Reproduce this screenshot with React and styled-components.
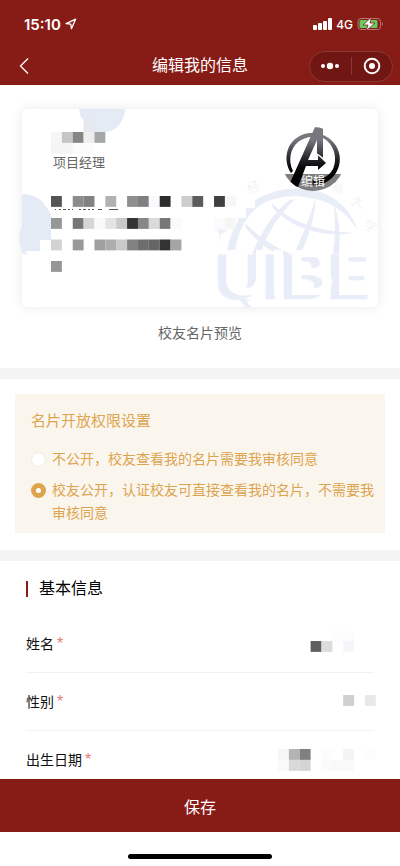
import React, { useState } from "react";
import styled, { createGlobalStyle } from "styled-components";

const GlobalStyle = createGlobalStyle`
  * {
    box-sizing: border-box;
  }
  body {
    margin: 0;
    background: #fff;
    font-family: "Liberation Sans", "Noto Sans CJK SC", sans-serif;
  }
  button {
    padding: 0;
    border: 0;
    background: none;
    color: inherit;
    font: inherit;
    cursor: pointer;
  }
`;

//Styled Components
const Page = styled.div`
  display: flex;
  flex-direction: column;
  height: 100vh;
`;

const Header = styled.header`
  flex: none;
  background: #871c17;
  color: #fff;
`;

const StatusBar = styled.div`
  display: flex;
  align-items: center;
  justify-content: space-between;
  height: 48px;
  padding: 0 16px 0 24px;
`;

const StatusGroup = styled.div`
  display: flex;
  align-items: center;
  gap: 4px;
`;

const Time = styled.span`
  font-family: Inter, sans-serif;
  font-size: 15px;
  font-weight: 600;
`;

const Network = styled.span`
  font-family: Inter, sans-serif;
  font-size: 12px;
  font-weight: 500;
`;

const NavBar = styled.div`
  display: grid;
  grid-template-columns: 1fr auto 1fr;
  align-items: center;
  height: 37px;
  padding: 0 7px 1px;
`;

const BackButton = styled.button`
  display: flex;
  justify-self: start;
  padding: 0 9px;
`;

const Title = styled.h1`
  margin: 0;
  font-size: 16px;
  font-weight: 400;
  line-height: 24px;
`;

const Capsule = styled.div`
  display: flex;
  align-items: center;
  justify-self: end;
  width: 84px;
  height: 31px;
  border: 1px solid #8d3531;
  border-radius: 16px;
  background: #701713;
`;

const CapsuleButton = styled.button`
  display: flex;
  flex: 1;
  align-items: center;
  justify-content: center;
  & + & {
    border-left: 1px solid #8b3833;
  }
`;

const Main = styled.main`
  flex: 1;
  min-height: 0;
  overflow-y: auto;
  scrollbar-width: none;
`;

const Preview = styled.section`
  padding: 24px 22px 23px;
`;

const Card = styled.div`
  position: relative;
  height: 198px;
  padding: 18px 33px 0 29px;
  border-radius: 4px;
  background: #fff;
  box-shadow: 0 0 12px rgba(0, 0, 0, 0.09);
`;

const Watermark = styled.svg`
  position: absolute;
  inset: 0;
  width: 100%;
  height: 100%;
  overflow: visible;
`;

// white letters, only their lower left shade shows
const ReliefText = styled.text`
  fill: #fff;
  filter: drop-shadow(-25px 13px 0 #e9edf7);
`;

const CardTop = styled.div`
  position: relative;
  display: flex;
  justify-content: space-between;
`;

const CardContact = styled.div`
  position: relative;
  padding-top: 5px;
`;

const Job = styled.p`
  margin: 0;
  padding-left: 2px;
  color: #666;
  font-size: 13px;
  line-height: 20px;
`;

const Avatar = styled.button`
  position: relative;
  width: 64px;
  height: 64px;
  border-radius: 50%;
  overflow: hidden;
`;

const AvatarEdit = styled.span`
  position: absolute;
  inset: auto 0 0;
  background: rgba(0, 0, 0, 0.5);
  color: #fff;
  font-size: 12px;
  line-height: 17px;
`;

const Mosaic = styled.svg`
  display: block;
  flex: none;
  overflow: visible;
`;

const Caption = styled.p`
  margin: 14px 0 0;
  color: #666;
  font-size: 14px;
  line-height: 24px;
  text-align: center;
`;

const Divider = styled.div`
  height: 11px;
  background: #f4f4f4;
`;

const Privacy = styled.fieldset`
  margin: 15px 15px 17px;
  padding: 15px 8px 8px 16px;
  border: 0;
  background: #fbf6ed;
  color: #dda450;
`;

const PrivacyTitle = styled.legend`
  float: left;
  width: 100%;
  margin-bottom: 15px;
  padding: 0;
  font-size: 15px;
  line-height: 24px;
`;

const Option = styled.label`
  display: flex;
  clear: both;
  gap: 6px;
  font-size: 14px;
  line-height: 23px;
  & + & {
    margin-top: 8px;
  }
`;

const Radio = styled.input`
  flex: none;
  appearance: none;
  width: 15px;
  height: 15px;
  margin: 4px 0;
  border: 1px solid #f0ebe3;
  border-radius: 50%;
  background: #fff;
  &:checked {
    border: 5px solid #dda450;
  }
`;

const Info = styled.section`
  padding: 16px 26px 0;
`;

const InfoTitle = styled.h2`
  display: flex;
  align-items: center;
  gap: 11px;
  margin: 0 0 14px;
  font-size: 16px;
  font-weight: 400;
  line-height: 24px;
  &::before {
    content: "";
    width: 2px;
    height: 16px;
    background: #871c17;
  }
`;

const Fields = styled.dl`
  margin: 0;
`;

const Field = styled.div`
  display: flex;
  align-items: center;
  justify-content: space-between;
  height: 58px;
  border-bottom: 1px solid #f2f2f2;
`;

const FieldLabel = styled.dt`
  color: #111;
  font-size: 14px;
  line-height: 20px;
`;

const Required = styled.span`
  margin-left: 3px;
  color: #e87b78;
  font-size: 16px;
  line-height: 1;
`;

const FieldValue = styled.dd`
  margin: 0;
`;

const Footer = styled.footer`
  flex: none;
  background: #fff;
`;

const SaveButton = styled.button`
  display: block;
  width: 100%;
  height: 53px;
  background: #871c17;
  color: #fff;
  font-size: 16px;
`;

const HomeBar = styled.div`
  display: flex;
  align-items: center;
  justify-content: center;
  height: 34px;
  padding-top: 14px;
  &::before {
    content: "";
    width: 36%;
    height: 5px;
    border-radius: 3px;
    background: #000;
  }
`;

// column, row top, colour
const CELL = 10.87;

const nameCells = [
  [3, -9, "#e6eaf0"],
  [3, -4, "#e6eaf0"],
  [0, 5, "#f6f6f6"],
  [1, 5, "#c6c6c6"],
  [2, 5, "#868686"],
  [3, 5, "#eeeeee"],
  [4, 5, "#a5a8a8"],
  [0, 16, "#f5f5f5"],
  [1, 16, "#f5f5f5"],
  [2, 16, "#fbfbfb"],
  [3, 16, "#fcfcfc"],
];

const contactCells = [
  [0, 0, "#555"],
  [2, 0, "#8c8c8c"],
  [3, 0, "#828282"],
  [5, 0, "#b2b2b2"],
  [7, 0, "#8f8f8f"],
  [8, 0, "#808080"],
  [9, 0, "#f8f9fc"],
  [10, 0, "#2d2d2d"],
  [12, 0, "#cdcdcd"],
  [13, 0, "#5c5c5c"],
  [15, 0, "#3f3f3f"],
  [16, 0, "#f6f7f9"],
  [0, 22, "#979797"],
  [2, 22, "#777"],
  [3, 22, "#d6d6d6"],
  [4, 22, "#f9f9f9"],
  [5, 22, "#e4e4e4"],
  [6, 22, "#c9c9c9"],
  [7, 22, "#333"],
  [8, 22, "#888"],
  [9, 22, "#dadada"],
  [10, 22, "#777"],
  [11, 22, "#fbfbfb"],
  [15, 22, "#fbfbfe"],
  [16, 22, "#f6f6f6"],
  [0, 43.5, "#d3d3d3"],
  [2, 43.5, "#999"],
  [4, 43.5, "#9f9f9f"],
  [5, 43.5, "#adadad"],
  [6, 43.5, "#c9c9c9"],
  [7, 43.5, "#828282"],
  [8, 43.5, "#6e6e6e"],
  [9, 43.5, "#666"],
  [10, 43.5, "#333"],
  [11, 43.5, "#a5a5a5"],
  [0, 65, "#969696"],
];

const fields = [
  {
    label: "姓名",
    cells: [
      [3, 12, "#5e5e5e"],
      [4, 12, "#dcdcdc"],
      [5, 2, "#fcfcfc"],
      [6, 2, "#fcfcfc"],
      [6, 12, "#f5f6fa"],
    ],
  },
  {
    label: "性别",
    cells: [
      [6, 8, "#cfcfcf"],
      [8, 8, "#e8e8e8"],
    ],
  },
  {
    label: "出生日期",
    cells: [
      [0, 4, "#f6f6f6"],
      [1, 4, "#b4b4b4"],
      [2, 4, "#808080"],
      [4, 4, "#fcfcfc"],
      [6, 4, "#f4f4f4"],
      [8, 4, "#fdfdfd"],
      [0, 15, "#f9f9f9"],
      [1, 15, "#d9d9d9"],
      [2, 15, "#d5d5d5"],
      [4, 15, "#fbfbfb"],
      [5, 15, "#f9f9f9"],
      [6, 15, "#fafafa"],
    ],
  },
];

const options = [
  { id: "private", text: "不公开，校友查看我的名片需要我审核同意" },
  { id: "public", text: "校友公开，认证校友可直接查看我的名片，不需要我审核同意" },
];

function Masked({ width, height, cells, children }) {
  return (
    <Mosaic width={width} height={height} viewBox={`0 0 ${width} ${height}`} aria-hidden="true">
      {children}
      {cells.map(([col, y, fill]) => (
        <rect key={`${col}-${y}`} x={col * CELL} y={y} width={CELL} height={CELL} fill={fill} />
      ))}
    </Mosaic>
  );
}

function CardWatermark() {
  return (
    <Watermark viewBox="0 0 356 198" preserveAspectRatio="xMidYMid meet" aria-hidden="true">
      <g fill="#e4ebf5">
        <path d="M57 0H103C102 14 93 23 82 23H68V10H60Q58 6 57 0Z" />
        <path d="M0 85C12 85 20 90 23 97C27 100 30 106 30 112L29 114V131H18V142H3L6 146L0 144.500V141C-4 135-3 124 0 118Z" />
      </g>
      <g transform="translate(178 81) scale(.3333)" fill="#e9edf7">
        <path d="M80 191C86 150 98 115 118 86L105 84H138V55H165V30C230-8 300-10 350 2C420 22 460 75 473 121C440 65 390 32 330 24C270 12 210 22 170 54C130 90 108 140 105 191Z" />
        <path d="M157 191C175 145 215 70 268 30L285 28C240 70 200 130 182 191Z" />
        <path d="M283 191C310 130 335 70 345 27C350 70 325 140 303 191Z" />
        <path d="M398 191C408 140 405 90 402 45C420 90 422 150 416 191Z" />
        <path d="M215 38C270 95 350 123 460 129C370 145 275 115 219 55Z" />
        <path d="M136 100C170 135 210 165 270 190L252 200C205 182 165 150 136 110Z" />
        <path d="M115 325L150 330L140 336L155 352L138 353Z" />
        <ReliefText
          x="67"
          y="316"
          fontFamily="Liberation Sans, sans-serif"
          fontSize="196"
          fontWeight="700"
        >
          UIBE
        </ReliefText>
      </g>
      <g fill="#edf0f6" fontFamily="Liberation Serif, Noto Sans CJK SC, serif" fontSize="13" fontWeight="300">
        <text x="225" y="83" transform="rotate(-20 231 78)">经</text>
        <text x="309" y="83" transform="rotate(15 315 78)">易</text>
        <text x="329" y="97" transform="rotate(20 335 93)">大</text>
        <text x="342" y="122" transform="rotate(25 348 118)">学</text>
        <path d="M259 72L256 80L258 73ZM195 120L201 137L198 126L206 121Z" />
      </g>
    </Watermark>
  );
}

function AvatarLogo() {
  return (
    <svg width="64" height="64" viewBox="0 0 64 64" aria-hidden="true">
      <defs>
        <linearGradient id="steel" gradientUnits="userSpaceOnUse" x1="0" y1="0" x2="0" y2="64">
          <stop offset="0" stopColor="#77777d" />
          <stop offset=".2" stopColor="#77777f" />
          <stop offset=".5" stopColor="#232328" />
          <stop offset=".65" stopColor="#060608" />
        </linearGradient>
      </defs>
      <g fill="url(#steel)">
        <path d="M10 46C2 34 5 17 17 10C22 6.500 27 5.500 33 6L31 10C26 10 21 12 17 15C9 22 7 34 12 44ZM42 8C57 14 63 31 56 44C50 56 36 61 24 57L27 52C37 55 47 51 52 42C57 31 53 17 42 11Z" />
        <path d="M34 0H42V32L36 28V13L27 33H37V28L45 36L37 43V39H25L17 60L8 58Z" />
      </g>
      <path d="M36 27L44 33" stroke="#fff" strokeWidth="1.5" />
    </svg>
  );
}

function App() {
  const [visibility, setVisibility] = useState("public");

  return (
    <>
      <GlobalStyle />
      <Page>
        <Header>
          <StatusBar>
            <StatusGroup>
              <Time>15:10</Time>
              <svg width="12" height="12" viewBox="0 0 11 11" fill="none" stroke="#fff" aria-hidden="true">
                <path d="M1 5.200L9.800 1L5.900 9.800L5.300 5.700Z" strokeWidth="1.2" strokeLinejoin="round" />
              </svg>
            </StatusGroup>
            <StatusGroup>
              <svg width="19" height="12" viewBox="0 0 19 12" fill="#fff" aria-hidden="true">
                <rect x="0" y="7" width="4" height="5" rx="1" />
                <rect x="5" y="5" width="4" height="7" rx="1" />
                <rect x="10" y="3" width="4" height="9" rx="1" />
                <rect x="15" y="0" width="4" height="12" rx="1" />
              </svg>
              <Network>4G</Network>
              <svg width="27" height="14" viewBox="0 0 27 14" aria-hidden="true">
                <rect x="1" y="1.5" width="22.5" height="11" rx="3" fill="none" stroke="#b77774" />
                <path d="M25 5Q27 7 25 9Z" fill="#b77774" />
                <rect x="2.5" y="3" width="18" height="8" rx="1.5" fill="#65cc62" />
                <path d="M14.500 0L6 8H11L9 14L18 6H13Z" fill="#fff" stroke="#871c17" strokeWidth=".8" />
              </svg>
            </StatusGroup>
          </StatusBar>
          <NavBar>
            <BackButton type="button" aria-label="返回">
              <svg width="16" height="18" viewBox="0 0 16 18" fill="none" stroke="#fff" strokeWidth="1.3">
                <path d="M12 1.500L4.500 9L12 16.500" />
              </svg>
            </BackButton>
            <Title>编辑我的信息</Title>
            <Capsule>
              <CapsuleButton type="button" aria-label="更多">
                <svg width="20" height="18" viewBox="0 0 20 18" fill="#fff">
                  <circle cx="3" cy="9" r="2" />
                  <circle cx="10" cy="9" r="3.2" />
                  <circle cx="17" cy="9" r="2" />
                </svg>
              </CapsuleButton>
              <CapsuleButton type="button" aria-label="关闭">
                <svg width="18" height="18" viewBox="0 0 18 18">
                  <circle cx="9" cy="9" r="7.3" fill="none" stroke="#fff" strokeWidth="2" />
                  <circle cx="9" cy="9" r="3" fill="#fff" />
                </svg>
              </CapsuleButton>
            </Capsule>
          </NavBar>
        </Header>

        <Main>
          <Preview>
            <Card>
              <CardWatermark />
              <CardTop>
                <div>
                  <Masked width={56} height={26} cells={nameCells} />
                  <Job>项目经理</Job>
                </div>
                <Avatar type="button">
                  <AvatarLogo />
                  <AvatarEdit>编辑</AvatarEdit>
                </Avatar>
              </CardTop>
              <CardContact>
                <Masked width={196} height={78} cells={contactCells}>
                  <path
                    d="M4 13.500H5M8 13.500H10M12 13.500H15M17 13.500H19M21 13.500H22M28 13.500H30M32 13.500H35M37 13.500H39M41 13.500H43M47 13.500H51M58 13.500H67"
                    stroke="#555"
                  />
                </Masked>
              </CardContact>
            </Card>
            <Caption>校友名片预览</Caption>
          </Preview>

          <Divider />

          <Privacy>
            <PrivacyTitle>名片开放权限设置</PrivacyTitle>
            {options.map((option) => (
              <Option key={option.id}>
                <Radio
                  type="radio"
                  name="visibility"
                  checked={visibility === option.id}
                  onChange={() => setVisibility(option.id)}
                />
                <span>{option.text}</span>
              </Option>
            ))}
          </Privacy>

          <Divider />

          <Info>
            <InfoTitle>基本信息</InfoTitle>
            <Fields>
              {fields.map((field) => (
                <Field key={field.label}>
                  <FieldLabel>
                    {field.label}
                    <Required>*</Required>
                  </FieldLabel>
                  <FieldValue>
                    <Masked width={96} height={30} cells={field.cells} />
                  </FieldValue>
                </Field>
              ))}
            </Fields>
          </Info>
        </Main>

        <Footer>
          <SaveButton type="button">保存</SaveButton>
          <HomeBar />
        </Footer>
      </Page>
    </>
  );
}

export default App;
